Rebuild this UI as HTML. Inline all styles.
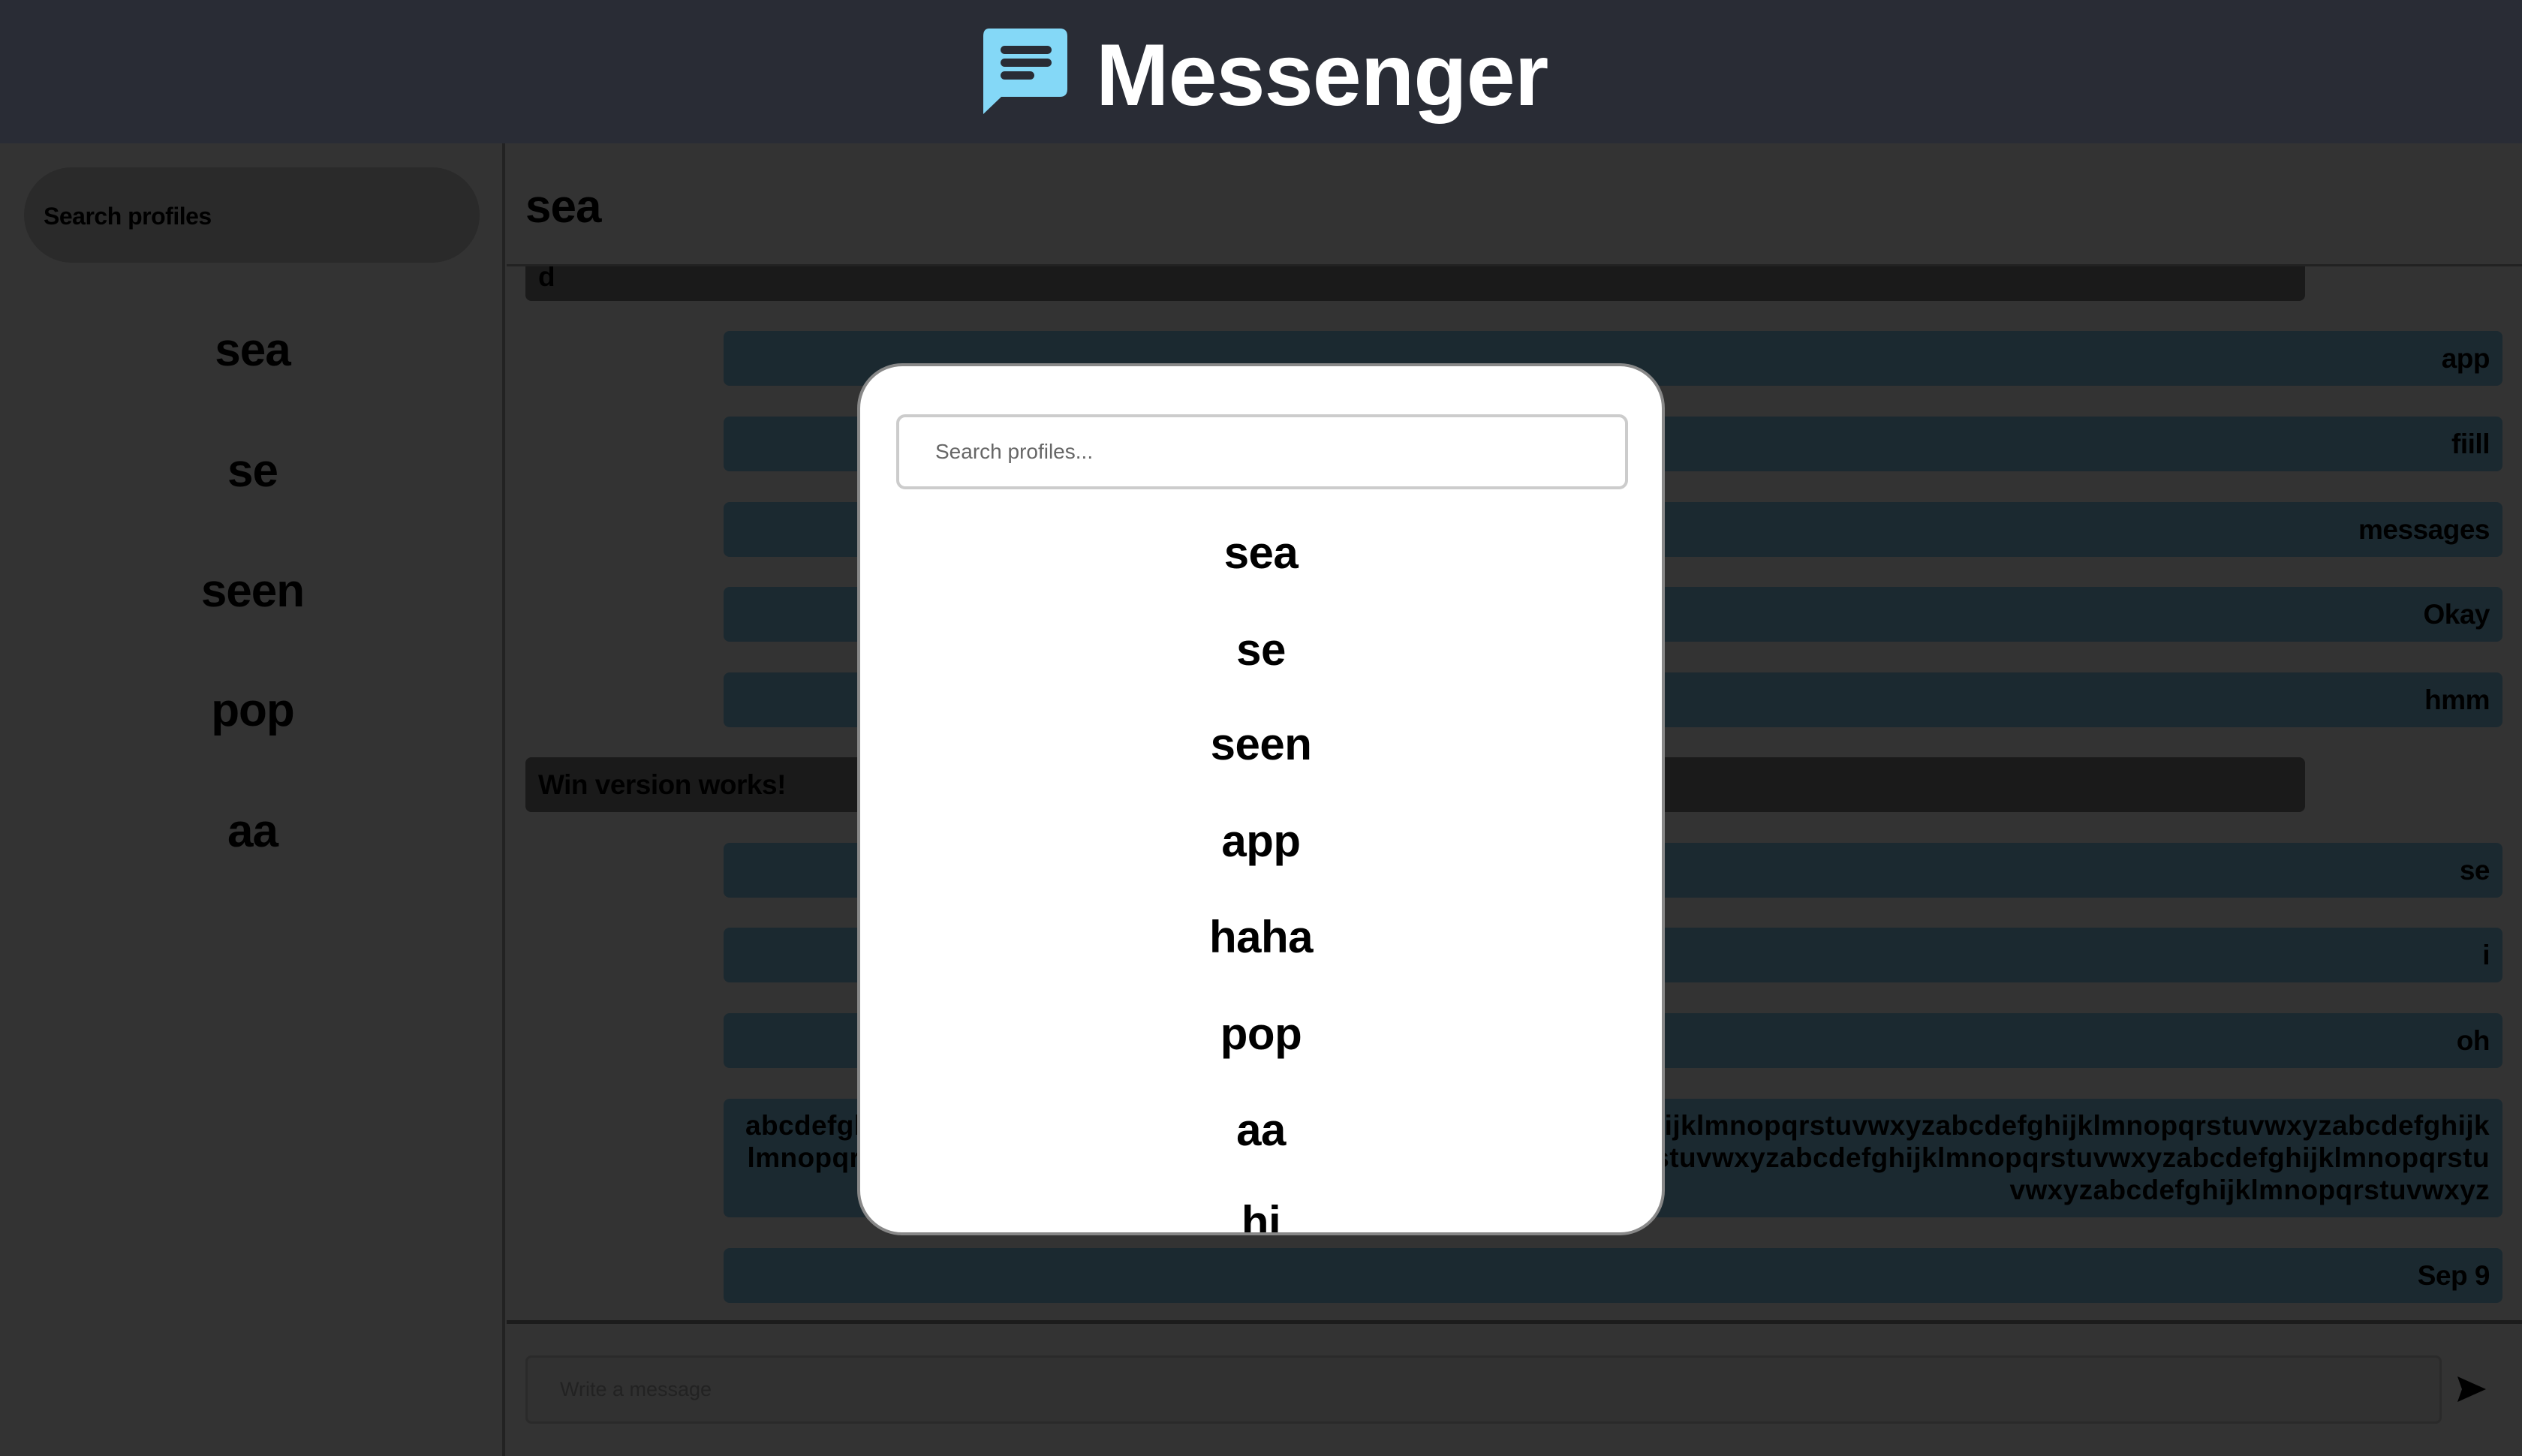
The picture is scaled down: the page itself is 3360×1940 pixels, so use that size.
<!DOCTYPE html>
<html><head><meta charset="utf-8"><style>
*{margin:0;padding:0;box-sizing:border-box}
body{width:3360px;height:1940px;overflow:hidden;background:#333;font-family:"Liberation Sans",sans-serif;position:relative}
.abs{position:absolute}
.hdr{left:0;top:0;width:3360px;height:191px;background:#292c35}
.logo{left:1460px;top:32px;font-size:117px;font-weight:bold;color:#fff;letter-spacing:-1px}
.side{left:0;top:191px;width:673px;height:1749px;border-right:4px solid #222}
.pill{left:32px;top:223px;width:607px;height:127px;border-radius:64px;background:#2a2a2a;font-size:32px;font-weight:bold;color:#000;padding-left:26px;line-height:130px;letter-spacing:-.5px}
.si{left:0;width:673px;text-align:center;font-size:62px;font-weight:bold;color:#000;line-height:70px;letter-spacing:-1px}
.ch{left:700px;top:240px;font-size:62px;font-weight:bold;color:#000;letter-spacing:-1px}
.hline{left:675px;top:352px;width:2685px;height:3px;background:#222}
.b{left:964px;width:2370px;background:#1b2930;border-radius:8px;color:#000;font-size:37px;font-weight:bold;text-align:right;padding-right:17px;line-height:73px;letter-spacing:-.5px}
.r{left:700px;width:2371px;background:#1a1a1a;border-radius:8px;color:#000;font-size:37px;font-weight:bold;padding-left:17px;line-height:73px;letter-spacing:-.5px}
.modal{left:1142px;top:484px;width:1076px;height:1162px;background:#fff;border:4px solid #888;border-radius:60px;overflow:hidden}
.inp{left:48px;top:64px;width:975px;height:100px;border:4px solid #ccc;border-radius:12px;font-size:28px;color:#666;padding-left:48px;line-height:92px}
.mi{left:0;width:1068px;text-align:center;font-size:60px;font-weight:bold;color:#000;line-height:70px;letter-spacing:-.5px}
</style></head><body>
<div class="abs hdr"></div>
<svg class="abs" style="left:1306px;top:36px" width="120" height="118" viewBox="0 0 120 118">
<path d="M12 2 H106 Q116 2 116 12 V83 Q116 93 106 93 H28 L4 116 V12 Q4 2 12 2Z" fill="#84d8f7"/>
<rect x="27" y="25" width="68" height="11" rx="5.5" fill="#292c35"/>
<rect x="27" y="42" width="68" height="11" rx="5.5" fill="#292c35"/>
<rect x="27" y="59" width="45" height="11" rx="5.5" fill="#292c35"/>
</svg>
<div class="abs logo">Messenger</div>
<div class="abs side"></div>
<div class="abs pill">Search profiles</div>
<div class="abs si" style="top:432px">sea</div>
<div class="abs si" style="top:593px">se</div>
<div class="abs si" style="top:753px">seen</div>
<div class="abs si" style="top:912px">pop</div>
<div class="abs si" style="top:1073px">aa</div>
<div class="abs ch">sea</div>
<div class="abs r" style="top:354px;height:47px;line-height:30px;border-radius:0 0 8px 8px">d</div>
<div class="abs hline"></div>
<div class="abs b" style="top:441px;height:73px">app</div>
<div class="abs b" style="top:555px;height:73px">fiill</div>
<div class="abs b" style="top:669px;height:73px">messages</div>
<div class="abs b" style="top:782px;height:73px">Okay</div>
<div class="abs b" style="top:896px;height:73px">hmm</div>
<div class="abs r" style="top:1009px;height:73px">Win version works!</div>
<div class="abs b" style="top:1123px;height:73px">se</div>
<div class="abs b" style="top:1236px;height:73px">i</div>
<div class="abs b" style="top:1350px;height:73px">oh</div>
<div class="abs b" style="top:1464px;height:158px;line-height:43px;padding-top:14px;overflow:hidden;white-space:nowrap;letter-spacing:0.4px">abcdefghijklmnopqrstuvwxyzabcdefghijklmnopqrstuvwxyzabcdefghijklmnopqrstuvwxyzabcdefghijklmnopqrstuvwxyzabcdefghijk<br>lmnopqrstuvwxyzabcdefghijklmnopqrstuvwxyzabcdefghijklmnopqrstuvwxyzabcdefghijklmnopqrstuvwxyzabcdefghijklmnopqrstu<br>vwxyzabcdefghijklmnopqrstuvwxyz</div>
<div class="abs b" style="top:1663px;height:73px">Sep 9</div>
<div class="abs" style="left:675px;top:1759px;width:2685px;height:5px;background:#1c1c1c"></div>
<div class="abs" style="left:700px;top:1806px;width:2553px;height:91px;border:3px solid #2a2a2a;border-radius:8px;background:#313131;font-size:27px;color:#222;padding-left:43px;line-height:85px">Write a message</div>
<svg class="abs" style="left:3272px;top:1832px" width="42" height="38" viewBox="0 0 42 38"><path d="M2 2 L40 19 L2 36 L8 19Z" fill="#000"/></svg>
<div class="abs modal">
<div class="abs inp">Search profiles...</div>
<div class="abs mi" style="top:214px">sea</div>
<div class="abs mi" style="top:343px">se</div>
<div class="abs mi" style="top:469px">seen</div>
<div class="abs mi" style="top:598px">app</div>
<div class="abs mi" style="top:726px">haha</div>
<div class="abs mi" style="top:855px">pop</div>
<div class="abs mi" style="top:983px">aa</div>
<div class="abs mi" style="top:1106px">hi</div>
</div>
</body></html>
